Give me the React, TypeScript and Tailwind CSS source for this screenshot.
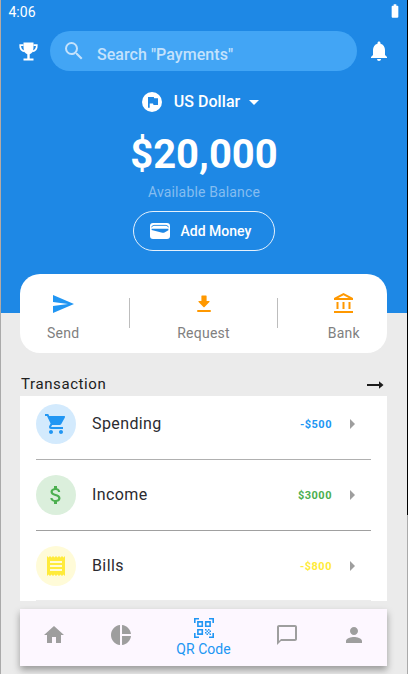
import React from "react";
import {
  MdSearch, MdNotifications, MdArrowDropDown, MdSend, MdOutlineAccountBalance,
  MdShoppingCart, MdAttachMoney, MdReceipt, MdArrowRight, MdHome, MdPieChart, MdChatBubbleOutline,
  MdPerson, MdBatteryFull,
} from "react-icons/md";

function TrophyIcon() {
  return (
    <svg width="19" height="19" viewBox="0 0 19 19" className="ml-[18px] shrink-0">
      <path d="M4.500 3.200H1.200Q.9 8.600 5.800 9.300M14.500 3.200H17.800Q18.100 8.600 13.200 9.300" fill="none" stroke="#fff" strokeWidth="1.700" />
      <path d="M4.500 .4H14.500V5Q14.500 10.800 10.700 12.200V16.600H14.500V18.500H4.500V16.600H8.300V12.200Q4.500 10.800 4.500 5Z" fill="#fff" />
    </svg>
  );
}

function WalletIcon() {
  return (
    <svg width="20" height="16" viewBox="0 0 20 16" className="shrink-0">
      <rect width="20" height="16" rx="3" fill="#fff" />
      <path d="M1.600 4.300Q2 2.400 4 2.400H16Q18 2.400 18.400 4.300" fill="none" stroke="#1e88e5" strokeWidth="0.9" />
      <path d="M1.600 5.700H18.400V7.300L14.500 9.500Q13.500 10.100 12.300 9.700L1.600 6.900Z" fill="#1e88e5" />
    </svg>
  );
}

function FlagIcon() {
  return (
    <svg width="20" height="20" viewBox="0 0 20 20" className="shrink-0">
      <circle cx="10" cy="10" r="10" fill="#fff" />
      <path d="M6 4.900H11.800L12.200 6.200H16V13H11.500L11 11.500H7.700V15.800H6Z" fill="#1e88e5" />
    </svg>
  );
}

function RequestIcon() {
  return (
    <svg width="24" height="24" viewBox="0 0 24 24" fill="#ff9800">
      <path d="M10 3.500h4q.6 0 .6.6V9h2.300q1.400 0 .5 1L12.600 15q-.6.6-1.200 0L6.600 10q-.9-1 .5-1h2.300V4.100Q9.400 3.500 10 3.500z" />
      <rect x="5" y="18" width="14" height="2" rx="1" />
    </svg>
  );
}

function QrIcon() {
  return (
    <svg width="20" height="20" viewBox="0 0 20 20" fill="none" stroke="#2196f3" strokeWidth="1.6">
      <path d="M.8 5V.8H5M15 .8h4.200V5M.8 15v4.200H5M15 19.200h4.200V15" />
      <path d="M3.900 3.900h4.400v4.400H3.900zM11.700 3.900h4.400v4.400h-4.400zM3.900 11.700h4.400v4.400H3.900z" />
      <path d="M11 11h1.500v1.500H11zM14 11h1.500v1.500H14zM12.500 12.500H14V14h-1.500zM15.500 12.500H17V14h-1.500zM11 14h1.500v1.500H11zM14 14h1.500v1.500H14zM12.500 15.500H14V17h-1.500zM15.500 15.500H17V17h-1.500z" fill="#2196f3" stroke="none" />
    </svg>
  );
}

function Row({ icon, bg, label, amount, color }: { icon: React.ReactNode; bg: string; label: string; amount: string; color: string }) {
  return (
    <div className="flex h-10 items-center">
      <div className={`flex size-10 items-center justify-center rounded-full ${bg}`}>{icon}</div>
      <span className="ml-4 flex-1 text-[16px] leading-5 tracking-[0.4px] text-[#2b2b30]">{label}</span>
      <span className={`pt-[2px] text-[11px] font-bold tracking-[0.5px] ${color}`}>{amount}</span>
      <MdArrowRight className="ml-2 mr-[7px] size-6 text-[#9e9e9e]" />
    </div>
  );
}

function Action({ icon, label }: { icon: React.ReactNode; label: string }) {
  return (
    <div className="flex flex-col items-center">
      <div className="flex h-6 items-center">{icon}</div>
      <span className="mt-[7px] text-[14px] leading-5 tracking-[0.25px] text-[#808080]">{label}</span>
    </div>
  );
}

export default function App() {
  return (
    <div className="flex h-[674px] w-[408px] overflow-hidden bg-[#ebebeb] font-[Roboto,sans-serif]">
      <div className="flex w-px flex-col">
        <div className="h-[305px] bg-[#b5aaa4]" />
        <div className="flex-1 bg-[#aaaaaa]" />
      </div>
      <main className="flex w-[406px] flex-col">
        <header className="flex h-[313px] shrink-0 flex-col items-center bg-[#1e88e5] text-white">
          <div className="flex h-[26px] w-full items-center justify-between pl-[7.5px] pr-1">
            <span className="-mt-[2px] text-[14px] leading-4">4:06</span>
            <MdBatteryFull className="-mt-1 size-4" />
          </div>
          <div className="mt-[5px] flex h-10 w-full items-center">
            <TrophyIcon />
            <div className="ml-3 flex h-10 w-[307px] items-center rounded-full bg-[#42a5f5] pl-3 text-[#c4e2fc]">
              <MdSearch className="size-6" />
              <span className="ml-[11px] mt-[7px] text-[16px] font-medium leading-5 tracking-[0.05px]">Search "Payments"</span>
            </div>
            <MdNotifications className="ml-[10px] size-6" />
          </div>
          <div className="mt-[19px] flex h-6 items-center">
            <FlagIcon />
            <span className="ml-3 text-[16px] font-medium tracking-[0.05px]">US Dollar</span>
            <MdArrowDropDown className="ml-[2px] size-6" />
          </div>
          <div className="mt-[16px] text-[40px] font-bold leading-[50px]">$20,000</div>
          <div className="mt-[2px] text-[14px] leading-5 tracking-[0.15px] text-[#85bdf0]">Available Balance</div>
          <div className="mr-px mt-[9px] flex h-10 w-[142px] items-center rounded-full border border-[#e5f1fc] pl-[16px]">
            <WalletIcon />
            <span className="ml-[11px] text-[14px] font-medium">Add Money</span>
          </div>
        </header>

        <section className="relative -mt-[39px] ml-[19px] flex h-[79px] w-[367px] shrink-0 justify-between rounded-[20px] bg-white px-[27px] pt-[18px]">
          <Action icon={<MdSend className="size-6 text-[#2196f3]" />} label="Send" />
          <div className="ml-[3px] mt-[6px] h-[30px] w-px bg-[#bdbdbd]" />
          <Action icon={<RequestIcon />} label="Request" />
          <div className="mr-[3px] mt-[6px] h-[30px] w-px bg-[#bdbdbd]" />
          <Action icon={<MdOutlineAccountBalance className="size-6 text-[#ff9800]" />} label="Bank" />
        </section>

        <div className="ml-5 mt-[20px] flex h-[23px] w-[363px] shrink-0 items-center justify-between">
          <span className="text-[15px] tracking-[0.6px] text-[#202020]">Transaction</span>
          <svg width="17" height="8" viewBox="0 0 17 8"><path d="M0 4H13" stroke="#1b1b1b" strokeWidth="2" /><path d="M12 .3L16.500 4L12 7.700Z" fill="#1b1b1b" /></svg>
        </div>
        <section className="ml-[19px] flex h-[205px] w-[367px] shrink-0 flex-col bg-white px-4 pt-[8px]">
          <Row icon={<MdShoppingCart className="size-6 text-[#2196f3]" />} bg="bg-[#d3eafd]" label="Spending" amount="-$500" color="text-[#2196f3]" />
          <div className="my-[15px] h-px bg-[#b0b0b0]" />
          <Row icon={<MdAttachMoney className="size-6 text-[#4caf50]" />} bg="bg-[#dbefdc]" label="Income" amount="$3000" color="text-[#4caf50]" />
          <div className="my-[15px] h-px bg-[#a0a0a0]" />
          <Row icon={<MdReceipt className="size-6 text-[#ffeb3b]" />} bg="bg-[#fffbd8]" label="Bills" amount="-$800" color="text-[#ffeb3b]" />
          <div className="mt-auto h-px bg-[#ececec]" />
        </section>
        <nav className="ml-[19px] mt-2 flex h-[57px] w-[367px] shrink-0 items-center bg-[#fdf7ff] text-[#9e9e9e] shadow-[0_4px_7px_rgba(0,0,0,0.35)]">
          <div className="flex w-[67px] justify-center pb-[5px]"><MdHome className="size-6" /></div>
          <div className="flex w-[67px] justify-center pb-[5px]"><MdPieChart className="size-6" /></div>
          <div className="flex w-[99px] flex-col items-center pt-px text-[#2196f3]">
            <QrIcon /><span className="mt-[1px] text-[14px] leading-5 tracking-[0.05px]">QR Code</span>
          </div>
          <div className="flex w-[67px] justify-center pb-[5px]"><MdChatBubbleOutline className="size-6" /></div>
          <div className="flex w-[67px] justify-center pb-[5px]"><MdPerson className="size-6" /></div>
        </nav>
      </main>
      <div className="flex w-px flex-col"><div className="h-[515px] bg-black" /><div className="flex-1 bg-[#aaa]" /></div>
    </div>
  );
}
